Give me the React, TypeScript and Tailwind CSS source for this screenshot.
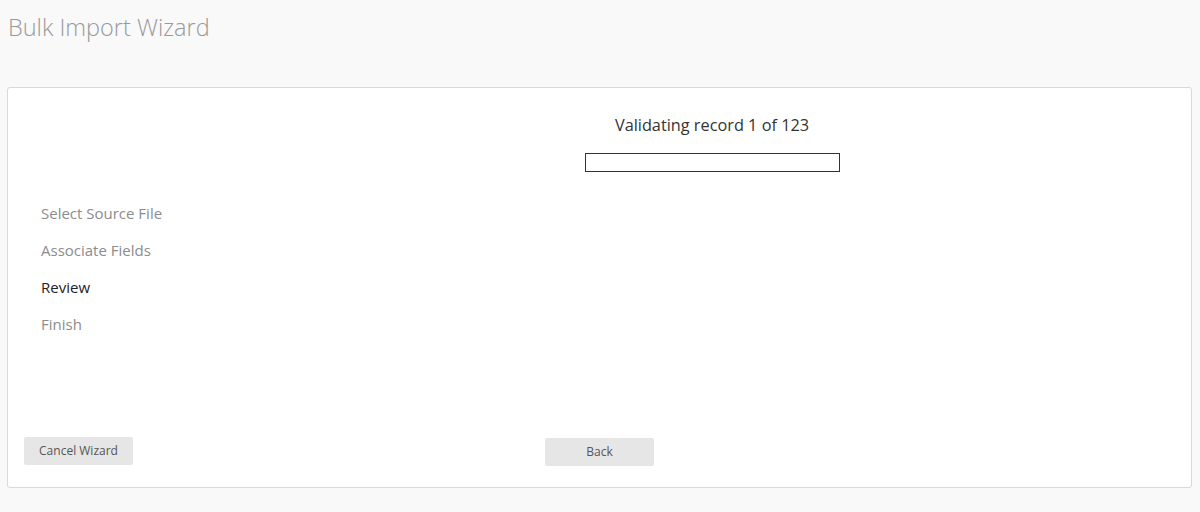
const steps = [
  { label: "Select Source File", active: false },
  { label: "Associate Fields", active: false },
  { label: "Review", active: true },
  { label: "Finish", active: false },
];

const font = { fontFamily: '"Open Sans", "Noto Sans", sans-serif' };

const WizardButton = ({ children }: { children: React.ReactNode }) => (
  <button
    type="button"
    className="h-[28px] w-[109px] rounded-[2px] bg-[#e6e6e6] text-[12px] text-[#555]"
  >
    {children}
  </button>
);

export default function App() {
  return (
    <div
      className="min-h-[512px] w-[1200px] bg-[#f9f9f9] px-[7px]"
      style={font}
    >
      <h1 className="pt-[12px] pl-px text-[23.5px] leading-[30px] font-light text-[#999]">
        Bulk Import Wizard
      </h1>

      <div className="mt-[45px] flex h-[401px] w-[1185px] rounded-[3px] border border-[#d9d9d9] bg-white">
        <div className="flex w-[521px] flex-col pl-4 pb-[22px]">
          <ul className="pt-[107px] pl-[17px]">
            {steps.map((s) => (
              <li
                key={s.label}
                className={`text-[15px] leading-[37px] ${
                  s.active ? "text-[#222]" : "text-[#8c8c8c]"
                }`}
              >
                {s.label}
              </li>
            ))}
          </ul>
          <div className="mt-auto">
            <WizardButton>Cancel Wizard</WizardButton>
          </div>
        </div>

        <div className="flex flex-1 flex-col pl-4 pb-[21px]">
          <div className="-ml-4 flex w-[366px] flex-col items-center pt-[25px]">
            <p className="text-[16.3px] leading-[24px] text-[#333]">
              Validating record 1 of 123
            </p>
            <div className="mt-[16px] h-[19px] w-[255px] border border-[#333] bg-white" />
          </div>
          <div className="mt-auto">
            <WizardButton>Back</WizardButton>
          </div>
        </div>
      </div>
    </div>
  );
}
